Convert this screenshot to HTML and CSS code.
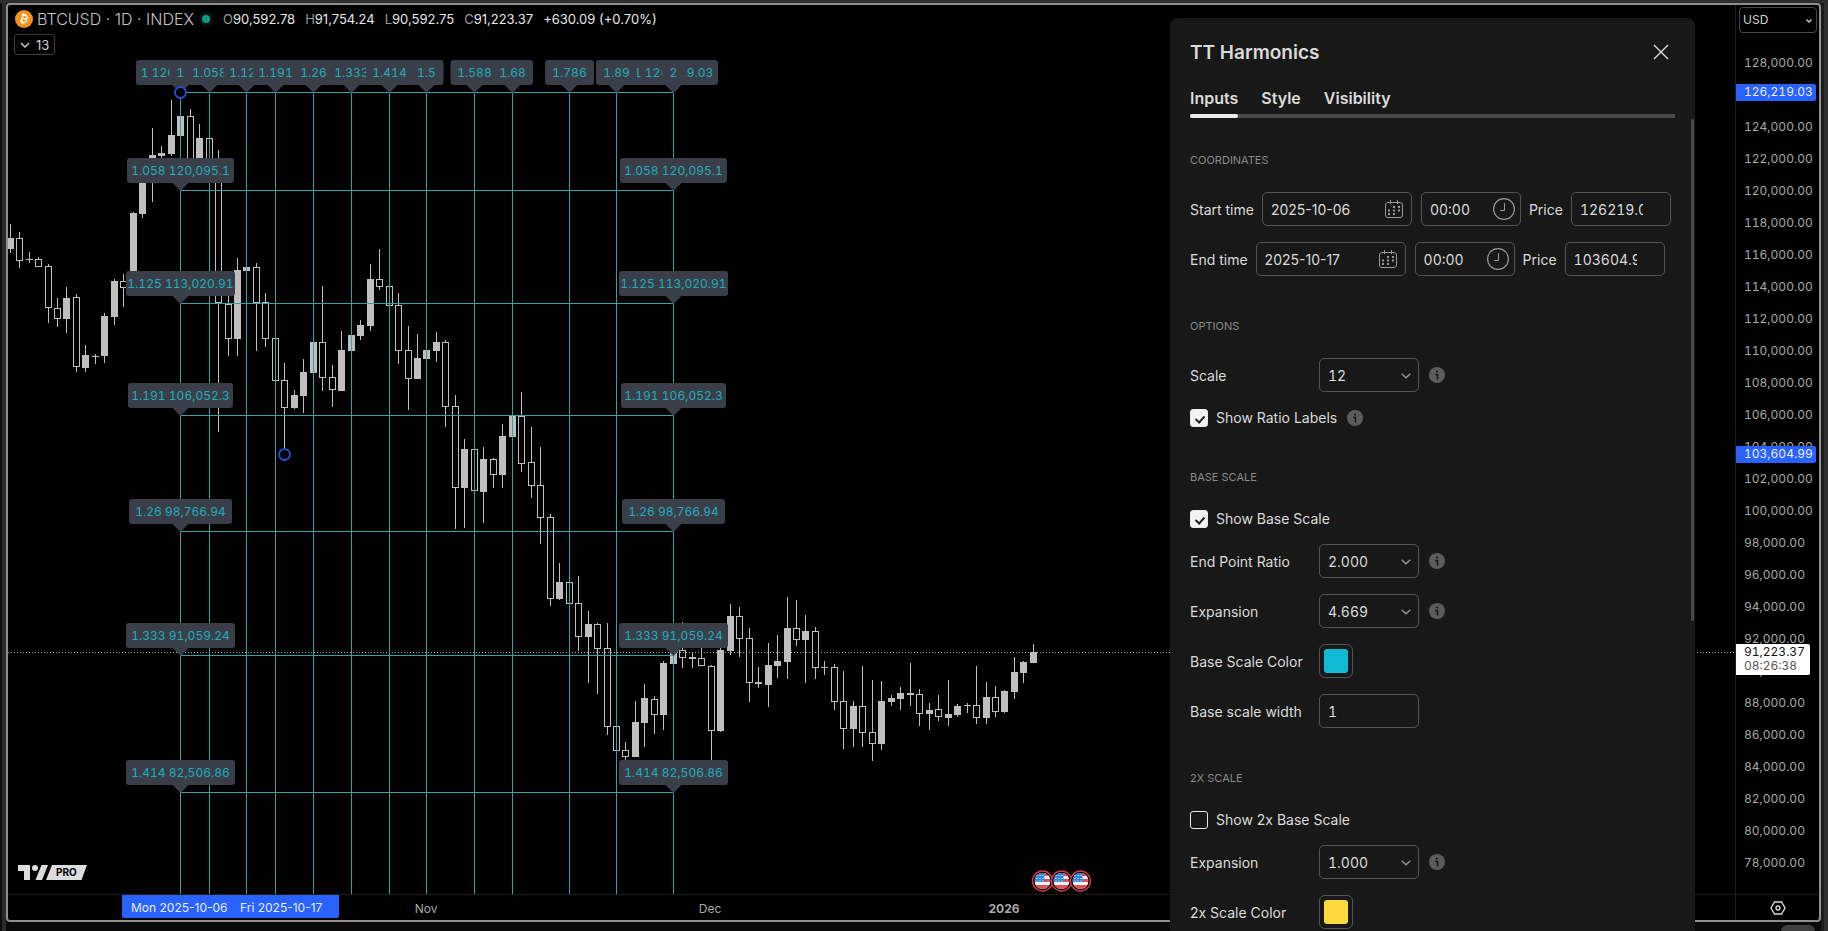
FILE: index.html
```html
<!DOCTYPE html>
<html lang="en">
<head>
    <meta charset="utf-8">
    <title>BTCUSD - TT Harmonics</title>
    <link rel="stylesheet" href="styles.css">
</head>
<body>
    <main class="chart-frame">
        <section class="plot">
            <svg id="chart" class="chart"></svg>

            <div class="legend">
                <div class="legend-row">
                    <svg class="coin" width="18" height="18" viewBox="0 0 18 18">
                        <circle cx="9" cy="9" r="9" fill="#f7931a"/>
                        <path d="M6.6 4.6l4.2 1.1q2 .6 1.5 2.1-.4 1.1-1.7 1 1.5.6 1 2.1-.6 1.8-2.9 1.1L5 10.9M8 5l-1.7 6.4M6.9 8.2l3.6.9M8.8 3.3l-.5 1.9M10.7 3.8l-.5 1.9M7.1 11.6l-.5 2M9 12.1l-.5 2" fill="none" stroke="#fff" stroke-width="1.3"/>
                    </svg>
                    <span class="symbol">BTCUSD · 1D · INDEX</span>
                    <span class="market-dot"></span>
                    <span class="ohlc"><i>O</i>90,592.78</span>
                    <span class="ohlc"><i>H</i>91,754.24</span>
                    <span class="ohlc"><i>L</i>90,592.75</span>
                    <span class="ohlc"><i>C</i>91,223.37</span>
                    <span class="ohlc">+630.09 (+0.70%)</span>
                </div>
                <button class="collapse">
                    <svg width="10" height="6" viewBox="0 0 10 6"><path d="M1 1l4 4 4-4" fill="none" stroke="currentColor" stroke-width="1.4"/></svg>
                    13
                </button>
            </div>
        </section>

        <aside class="price-axis">
            <div class="currency">
                <select aria-label="Currency"><option>USD</option></select>
                <svg width="6" height="4" viewBox="0 0 6 4"><path d="M.5 .5l2.5 2.5 2.5-2.5" fill="none" stroke="currentColor" stroke-width="1.3"/></svg>
            </div>
            <ul id="prices" class="prices"></ul>
            <div class="price-tag start">126,219.03</div>
            <div class="price-tag end">103,604.99</div>
            <div class="price-tag last">91,223.37<span>08:26:38</span></div>
        </aside>

        <div class="time-axis"><svg id="times" class="chart"></svg></div>
        <button class="axis-settings" aria-label="Axis settings">
            <svg width="16" height="14" viewBox="0 0 16 14"><path d="M4.5 1h7L15 7l-3.5 6h-7L1 7z" fill="none" stroke="#ddd" stroke-width="1.3"/><circle cx="8" cy="7" r="2" fill="none" stroke="#ddd" stroke-width="1.3"/></svg>
        </button>
    </main>
    <div class="dock-tab"></div>

    <form class="dialog">
        <header class="dialog-head">
            <h2>TT Harmonics</h2>
            <button type="button" class="close" aria-label="Close">
                <svg width="16" height="16" viewBox="0 0 16 16"><path d="M1 1l14 14M15 1L1 15" stroke="currentColor" stroke-width="1.4"/></svg>
            </button>
        </header>
        <nav class="tabs">
            <button type="button" class="tab active">Inputs</button>
            <button type="button" class="tab">Style</button>
            <button type="button" class="tab">Visibility</button>
        </nav>

        <div class="dialog-body">
            <h3>Coordinates</h3>
            <div class="row">
                <label for="start-date">Start time</label>
                <div class="field date"><input id="start-date" value="2025-10-06"><svg class="icon-cal"><use href="#cal"/></svg></div>
                <div class="field time"><input aria-label="Start hour" value="00:00"><svg class="icon-clock"><use href="#clock"/></svg></div>
                <label for="start-price">Price</label>
                <input id="start-price" class="box price" value="126219.03">
            </div>
            <div class="row">
                <label for="end-date">End time</label>
                <div class="field date"><input id="end-date" value="2025-10-17"><svg class="icon-cal"><use href="#cal"/></svg></div>
                <div class="field time"><input aria-label="End hour" value="00:00"><svg class="icon-clock"><use href="#clock"/></svg></div>
                <label for="end-price">Price</label>
                <input id="end-price" class="box price" value="103604.99">
            </div>

            <h3>Options</h3>
            <div class="row">
                <label class="name" for="scale">Scale</label>
                <div class="select"><select id="scale" class="box"><option>12</option></select><svg class="chev"><use href="#chev"/></svg></div>
                <svg class="info"><use href="#info"/></svg>
            </div>
            <div class="row check">
                <input type="checkbox" id="show-labels" checked>
                <label for="show-labels">Show Ratio Labels</label>
                <svg class="info"><use href="#info"/></svg>
            </div>

            <h3>Base scale</h3>
            <div class="row check">
                <input type="checkbox" id="show-base" checked>
                <label for="show-base">Show Base Scale</label>
            </div>
            <div class="row">
                <label class="name" for="ratio">End Point Ratio</label>
                <div class="select"><select id="ratio" class="box"><option>2.000</option></select><svg class="chev"><use href="#chev"/></svg></div>
                <svg class="info"><use href="#info"/></svg>
            </div>
            <div class="row">
                <label class="name" for="expansion">Expansion</label>
                <div class="select"><select id="expansion" class="box"><option>4.669</option></select><svg class="chev"><use href="#chev"/></svg></div>
                <svg class="info"><use href="#info"/></svg>
            </div>
            <div class="row">
                <label class="name" for="base-color">Base Scale Color</label>
                <input type="color" id="base-color" value="#0fbad6">
            </div>
            <div class="row">
                <label class="name" for="base-width">Base scale width</label>
                <input id="base-width" class="box" value="1">
            </div>

            <h3>2x scale</h3>
            <div class="row check">
                <input type="checkbox" id="show-2x">
                <label for="show-2x">Show 2x Base Scale</label>
            </div>
            <div class="row">
                <label class="name" for="expansion-2x">Expansion</label>
                <div class="select"><select id="expansion-2x" class="box"><option>1.000</option></select><svg class="chev"><use href="#chev"/></svg></div>
                <svg class="info"><use href="#info"/></svg>
            </div>
            <div class="row">
                <label class="name" for="color-2x">2x Scale Color</label>
                <input type="color" id="color-2x" value="#ffd83b">
            </div>
        </div>
        <div class="scrollbar"></div>
    </form>

    <svg class="sprites">
        <symbol id="cal" viewBox="0 0 18 18">
            <rect x=".5" y="2.5" width="17" height="15" rx="2.5" fill="none" stroke="currentColor"/>
            <path d="M5.5 0v4M12.5 0v4" stroke="currentColor"/>
            <path d="M8 6h2v2h-2zM13 6h2v2h-2zM3 9.5h2v2h-2zM8 9.5h2v2h-2zM13 9.5h2v2h-2zM3 13h2v2h-2zM8 13h2v2h-2z" fill="currentColor"/>
        </symbol>
        <symbol id="clock" viewBox="0 0 22 22">
            <circle cx="11" cy="11" r="10.4" fill="none" stroke="currentColor" stroke-width="1.2"/>
            <path d="M11.5 5v7.5h-4.5" fill="none" stroke="currentColor"/>
        </symbol>
        <symbol id="chev" viewBox="0 0 10 6">
            <path d="M.7 .7l4.3 4.1L9.3 .7" fill="none" stroke="currentColor" stroke-width="1.3"/>
        </symbol>
        <symbol id="info" viewBox="0 0 16 16">
            <circle cx="8" cy="8" r="8" fill="#5c5c5c"/>
            <path d="M6 7.5h2.5v5" fill="none" stroke="#181818" stroke-width="1.6"/>
            <circle cx="8" cy="4.5" r="1.1" fill="#181818"/>
        </symbol>
    </svg>

    <script src="script.js"></script>
</body>
</html>
```

FILE: styles.css
```css
* {
    box-sizing: border-box;
}
body {
    margin: 0;
    height: 100vh;
    overflow: hidden;
    display: flex;
    position: relative;
    padding: 3px 7px 9px 6px;
    background: linear-gradient(#2e2e2e 3px, transparent 3px),
        linear-gradient(90deg, #0d0d0d 2px, #2b2b2b 2px, #2b2b2b 6px, transparent 6px),
        linear-gradient(270deg, #303030 4px, #1c1c1c 4px, #1c1c1c 7px, transparent 7px),
        #0a0a0a;
    font-family: Inter, "Liberation Sans", sans-serif;
    font-size: 14px;
    color: #dbdbdb;
}
button, input, select {
    font: inherit;
    color: inherit;
    margin: 0;
    padding: 0;
    border: none;
    background: none;
}
svg {
    flex: none;
}
.price-axis, .tag-text, .box, .time input {
    font-variant-numeric: tabular-nums;
}

/* chart */
.chart-frame {
    flex: 1;
    display: grid;
    grid-template-columns: 1fr 84px;
    grid-template-rows: 1fr 26px;
    border: 2px solid #8f8f8f;
    border-radius: 4px;
    background: #000;
}
.plot {
    position: relative;
    min-width: 0;
    min-height: 0;
}
.chart {
    display: block;
    width: 100%;
    height: 100%;
}
.time-axis {
    min-width: 0;
    border-top: 1px solid #1c1c1c;
}
.legend {
    position: absolute;
    top: 4px;
    left: 6px;
}
.legend-row {
    display: flex;
    align-items: center;
    height: 20px;
}
.coin {
    margin: 0 4px 0 1px;
}
.symbol {
    font-size: 16px;
    font-weight: 300;
    color: #c4c4c4;
}
.market-dot {
    width: 8px;
    height: 8px;
    margin: 0 13px 0 8px;
    border-radius: 50%;
    background: #159a80;
    box-shadow: 0 0 0 3px #021512;
}
.ohlc {
    margin-right: 10px;
    font-size: 13px;
    color: #e8e8e8;
}
.ohlc i {
    font-style: normal;
    color: #9a9a9a;
}
.collapse {
    display: flex;
    align-items: center;
    gap: 6px;
    height: 21px;
    margin-top: 5px;
    padding: 0 5px;
    border: 1px solid #3d3d3d;
    border-radius: 3px;
    font-size: 13px;
    color: #d0d0d0;
}

/* price axis */
.price-axis {
    position: relative;
    min-height: 0;
    border-left: 1px solid #1c1c1c;
    font-size: 12px;
    color: #a8a8a8;
}
.currency {
    position: relative;
    height: 42px;
    padding: 2px 2px 0 3px;
}
.currency select {
    appearance: none;
    width: 100%;
    height: 26px;
    padding: 0 0 1px 3px;
    border: 1px solid #484848;
    border-radius: 4px;
    color: #d0d0d0;
}
.currency svg {
    position: absolute;
    right: 7px;
    top: 14px;
    color: #d0d0d0;
}
.prices {
    margin: 0;
    padding: 0 0 0 8px;
    list-style: none;
}
.prices li {
    height: 32px;
    line-height: 32px;
}
.price-tag {
    position: absolute;
    left: 0;
    padding: 0 0 1px 8px;
    line-height: 16px;
    border-radius: 0 2px 2px 0;
}
.price-tag.start, .price-tag.end {
    width: 80px;
    background: #2962ff;
    color: #e6edff;
}
.price-tag.start {
    top: 79px;
}
.price-tag.end {
    top: 441px;
}
.price-tag.last {
    top: 639px;
    width: 74px;
    padding-top: 1px;
    padding-bottom: 2px;
    line-height: 14px;
    background: #fff;
    color: #111;
}
.price-tag.last span {
    display: block;
    color: #555;
}
.axis-settings {
    display: flex;
    align-items: center;
    justify-content: center;
    border-top: 1px solid #1c1c1c;
    border-left: 1px solid #1c1c1c;
}
.dock-tab {
    position: absolute;
    right: 13px;
    bottom: 0;
    width: 34px;
    height: 6px;
    border-radius: 6px 6px 0 0;
    background: #3f3f3f;
}

/* chart text */
.tag-text {
    font-size: 12px;
    text-anchor: middle;
    fill: #20aebd;
}
.tick {
    font-size: 12px;
    text-anchor: middle;
    fill: #a8a8a8;
}
.tick.year {
    font-weight: 700;
}
.date-tag {
    font-size: 12px;
    fill: #e6edff;
}
.pro {
    font-size: 10px;
    font-weight: 700;
}

/* settings dialog */
.dialog {
    position: absolute;
    top: 18px;
    right: 133px;
    bottom: 0;
    width: 525px;
    padding: 24px 20px 0;
    overflow: hidden;
    border-radius: 8px 8px 0 0;
    background: #181818;
}
.dialog-head {
    display: flex;
    align-items: center;
    justify-content: space-between;
    height: 20px;
}
.dialog-head h2 {
    margin: 0;
    font-size: 19px;
    font-weight: 600;
}
.close {
    display: flex;
    margin-right: 6px;
}
.tabs {
    display: flex;
    gap: 23px;
    height: 34px;
    margin-top: 22px;
    border-bottom: 4px solid #4a4a4a;
}
.tab {
    position: relative;
    height: 30px;
    padding-bottom: 2px;
    font-size: 16px;
    font-weight: 600;
}
.tab.active::after {
    content: "";
    position: absolute;
    left: 0;
    right: 0;
    bottom: -4px;
    height: 4px;
    border-radius: 2px;
    background: #ebebeb;
}
.dialog-body {
    display: flex;
    flex-direction: column;
    gap: 16px;
    padding-top: 34px;
}
.dialog-body h3 {
    margin: 26px 0 8px;
    font-size: 11px;
    font-weight: 400;
    line-height: 16px;
    text-transform: uppercase;
    color: #8a8a8a;
}
.dialog-body h3:first-child {
    margin-top: 0;
}
.row {
    display: flex;
    align-items: center;
    gap: 8px;
    height: 34px;
}
.row.check {
    height: 19px;
}
.name {
    width: 121px;
}
.box, .field {
    width: 100px;
    height: 34px;
    border: 1px solid #545454;
    border-radius: 5px;
}
.box {
    padding-left: 8px;
}
.field {
    display: flex;
    align-items: center;
    padding-left: 8px;
}
.field.date {
    width: 150px;
    padding-right: 8px;
}
.field.time {
    padding-right: 5px;
    margin-left: 1px;
}
.field input {
    flex: 1;
    min-width: 0;
}
.box.price {
    padding-right: 27px;
}
.icon-cal {
    width: 18px;
    height: 18px;
    color: #999;
}
.icon-clock {
    width: 22px;
    height: 22px;
    color: #999;
}
.select {
    position: relative;
}
.select select {
    appearance: none;
}
.chev {
    position: absolute;
    right: 8px;
    top: 15px;
    width: 10px;
    height: 6px;
    color: #999;
}
.info {
    width: 16px;
    height: 16px;
    margin-left: 2px;
}
input[type=color] {
    appearance: none;
    width: 34px;
    height: 34px;
    padding: 4px;
    border: 1px solid #545454;
    border-radius: 6px;
}
input[type=color]::-webkit-color-swatch-wrapper {
    padding: 0;
}
input[type=color]::-webkit-color-swatch {
    border: none;
    border-radius: 3px;
}
input[type=checkbox] {
    appearance: none;
    position: relative;
    width: 18px;
    height: 18px;
    border: 1px solid #e8e8e8;
    border-radius: 3px;
}
input[type=checkbox]:checked {
    background: #f2f2f2;
}
input[type=checkbox]:checked::after {
    content: "";
    position: absolute;
    left: 6px;
    top: 4px;
    width: 4px;
    height: 7px;
    border: solid #222;
    border-width: 0 2px 2px 0;
    transform: rotate(42deg);
}
.scrollbar {
    position: absolute;
    top: 101px;
    right: 1px;
    width: 3px;
    height: 502px;
    border-radius: 2px;
    background: #484848;
}
.sprites {
    display: none;
}
```

FILE: script.js
```js
// x, high, body top, body bottom, low, up (1 = filled, 0 = hollow)
const candles = [
    [10, 224, 238, 249, 253, 1], [19, 232, 238, 261, 268, 0], [29, 252, 259, 260, 263, 1],
    [38, 257, 259, 267, 267, 0], [48, 264, 266, 308, 323, 0], [57, 298, 308, 319, 327, 0],
    [66, 287, 298, 319, 333, 1], [76, 294, 297, 367, 372, 0], [85, 345, 355, 368, 372, 1],
    [95, 354, 356, 357, 364, 1], [104, 313, 316, 356, 363, 1], [114, 279, 281, 317, 325, 1],
    [123, 274, 281, 288, 307, 0], [133, 212, 213, 275, 275, 1], [142, 165, 168, 214, 218, 1],
    [152, 128, 155, 160, 202, 1], [161, 146, 153, 156, 158, 1], [171, 100, 135, 154, 156, 1],
    [180, 116, 116, 136, 136, 1], [190, 109, 116, 175, 175, 0], [199, 124, 138, 165, 165, 1],
    [209, 138, 138, 170, 170, 0], [218, 150, 165, 303, 432, 0], [228, 296, 304, 339, 356, 0],
    [237, 258, 270, 339, 356, 1], [246, 267, 267, 271, 271, 1], [256, 263, 267, 303, 351, 0],
    [265, 293, 302, 339, 347, 0], [275, 338, 338, 381, 381, 0], [284, 363, 380, 408, 448, 0],
    [294, 390, 395, 408, 409, 1], [303, 359, 372, 396, 413, 1], [313, 342, 342, 373, 373, 1],
    [322, 286, 342, 378, 391, 0], [332, 365, 377, 390, 407, 0], [341, 331, 350, 391, 391, 1],
    [351, 335, 335, 351, 351, 1], [360, 320, 325, 336, 340, 1], [370, 264, 279, 326, 331, 1],
    [379, 249, 279, 287, 290, 0], [389, 286, 286, 306, 306, 0], [398, 293, 305, 351, 364, 0],
    [408, 326, 350, 379, 410, 0], [417, 334, 358, 379, 379, 1], [426, 350, 350, 359, 359, 1],
    [436, 332, 342, 351, 362, 1], [445, 340, 342, 407, 427, 0], [455, 395, 406, 488, 529, 0],
    [464, 439, 449, 488, 528, 1], [474, 449, 449, 491, 491, 0], [483, 447, 459, 492, 523, 1],
    [493, 458, 459, 475, 488, 0], [502, 424, 436, 475, 488, 1], [512, 415, 415, 437, 437, 1],
    [521, 392, 416, 464, 472, 0], [531, 427, 462, 486, 498, 0], [540, 447, 485, 518, 544, 0],
    [550, 514, 517, 599, 606, 0], [559, 563, 582, 599, 600, 1], [569, 582, 582, 604, 604, 0],
    [578, 576, 603, 637, 651, 0], [588, 611, 624, 637, 683, 1], [597, 623, 624, 649, 694, 0],
    [607, 623, 648, 727, 735, 0], [616, 726, 726, 751, 751, 0], [625, 742, 750, 757, 760, 0],
    [635, 701, 722, 757, 757, 1], [644, 684, 698, 723, 747, 1], [654, 696, 699, 715, 734, 0],
    [663, 661, 663, 715, 730, 1], [673, 650, 652, 664, 664, 1], [682, 622, 650, 658, 668, 0],
    [692, 652, 657, 659, 668, 1], [701, 645, 658, 666, 666, 0], [711, 665, 666, 731, 760, 0],
    [720, 645, 650, 731, 732, 1], [730, 604, 616, 651, 655, 1], [739, 607, 616, 639, 657, 0],
    [749, 628, 638, 683, 702, 0], [758, 667, 682, 684, 688, 1], [768, 643, 665, 685, 707, 1],
    [777, 635, 661, 666, 678, 1], [787, 597, 628, 662, 679, 1], [796, 600, 628, 640, 646, 0],
    [805, 615, 631, 640, 683, 1], [815, 627, 631, 668, 679, 0], [824, 661, 667, 668, 675, 1],
    [834, 664, 667, 702, 710, 0], [843, 671, 701, 729, 749, 0], [853, 701, 706, 729, 747, 1],
    [862, 666, 706, 733, 747, 0], [872, 680, 732, 744, 761, 0], [881, 681, 701, 744, 750, 1],
    [891, 695, 698, 702, 706, 1], [900, 687, 693, 699, 710, 1], [910, 663, 693, 695, 706, 1],
    [919, 689, 694, 714, 726, 0], [929, 703, 710, 714, 730, 1], [938, 695, 709, 717, 721, 0],
    [948, 680, 714, 718, 726, 1], [957, 704, 706, 715, 717, 1], [967, 703, 705, 706, 713, 1],
    [976, 666, 705, 718, 724, 0], [986, 682, 697, 718, 724, 1], [995, 686, 697, 712, 717, 0],
    [1004, 690, 691, 712, 713, 1], [1014, 657, 672, 692, 699, 1], [1023, 661, 662, 673, 683, 1],
    [1033, 644, 652, 663, 663, 1]
];

const columns = [180, 209, 246, 275, 313, 351, 389, 426, 474, 512, 569, 616, 673];
const levels = [92, 190, 303, 415, 531, 655, 792];

// centre x, tip y, width, text; later ones lie on top
const tags = [
    [180, 92, 89, '1 126,219.03'], [673, 92, 89, '1 126,219.03'],
    [180, 92, 22, '1'], [209, 92, 48, '1.058'], [246, 92, 46, '1.125'], [275, 92, 46, '1.191'],
    [313, 92, 38, '1.26'], [351, 92, 47, '1.333'], [389, 92, 47, '1.414'], [426, 92, 34, '1.5'],
    [474, 92, 48, '1.588'], [512, 92, 41, '1.68'], [569, 92, 49, '1.786'], [616, 92, 41, '1.89'],
    [673, 92, 24, '2']
];
[[190, 107, '1.058 120,095.1'], [303, 109, '1.125 113,020.91'], [415, 105, '1.191 106,052.3'],
 [531, 103, '1.26 98,766.94'], [655, 109, '1.333 91,059.24'], [792, 109, '1.414 82,506.86']]
    .forEach(([y, w, text]) => tags.push([180, y, w, text], [673, y, w, text]));

let out = '<g transform="translate(-8 -5)" shape-rendering="crispEdges">';
for (const [x, high, top, bottom, low, up] of candles) {
    if (high < top) out += `<rect x="${x}" y="${high}" width="1" height="${top - high}" fill="#bfbfbf"/>`;
    if (low > bottom) out += `<rect x="${x}" y="${bottom}" width="1" height="${low - bottom}" fill="#bfbfbf"/>`;
    out += up
        ? `<rect x="${x - 3}" y="${top}" width="7" height="${bottom - top}" fill="#bfbfbf"/>`
        : `<rect x="${x - 2.5}" y="${top + 0.5}" width="6" height="${bottom - top - 1}" fill="none" stroke="#bfbfbf"/>`;
}
out += '<path d="M8 652.5H1736" stroke="#b8b8b8" stroke-dasharray="1 2"/>';
for (const x of columns) out += `<path d="M${x + 0.5} 92V894" stroke="#3a9fa8"/>`;
for (const y of levels) out += `<path d="M180 ${y + 0.5}H673" stroke="#3a9fa8"/>`;
out += '</g><g transform="translate(-8 -5)">';
out += tags.map(([x, y, w, text]) => {
    const c = x + 0.5;
    return `<rect x="${c - w / 2}" y="${y - 32}" width="${w}" height="25" rx="3" fill="#3a3e48"/>
        <path d="M${c - 8} ${y - 7}h16l-8 8z" fill="#3a3e48"/>
        <text class="tag-text" x="${c}" y="${y - 15}">${text}</text>`;
}).join('');
for (const [x, y] of [[180.5, 92.5], [284.5, 454.5]])
    out += `<circle cx="${x}" cy="${y}" r="5.5" fill="#000" stroke="#2251d6" stroke-width="1.8"/>`;

// economic events
out += '<clipPath id="round"><circle r="8"/></clipPath>';
for (const x of [1042, 1061, 1080]) {
    out += `<g transform="translate(${x + 0.5} 881)"><circle r="10" fill="#000" stroke="#d13c4b" stroke-width="1.4"/>
        <g clip-path="url(#round)"><path d="M-8-8H8V8H-8z" fill="#f4f1f2"/>
        <path d="M-8-8H8v3H-8zM-8-2H8v3H-8zM-8 4H8v4H-8z" fill="#e0525a"/>
        <path d="M-8-8H2V1H-8z" fill="#2f86e0"/>
        <path d="M-6-5.5H2M-6-2.5H2M-6 0H2" stroke="#fff" stroke-dasharray="1 2"/></g></g>`;
}

// logo
out += `<g fill="#dcdcdc"><path d="M18 865h12v15h-6v-9h-6z"/><circle cx="35" cy="868" r="3"/>
    <path d="M41.5 865h6.5l-6 15h-6.5z"/><path d="M52 865h35l-5.5 15h-35.5z"/></g>
    <text class="pro" x="56" y="876">PRO</text></g>`;
document.getElementById('chart').innerHTML = out;

document.getElementById('times').innerHTML = `<g transform="translate(-8 -895)">
    <rect x="122" y="893" width="217" height="25" rx="2" fill="#2962ff"/>
    <text class="date-tag" x="131" y="912">Mon 2025-10-06</text>
    <text class="date-tag" x="240" y="912">Fri 2025-10-17</text>
    <text class="tick" x="426" y="913">Nov</text>
    <text class="tick" x="710" y="913">Dec</text>
    <text class="tick year" x="1004" y="913">2026</text></g>`;

let list = '';
for (let p = 128000; p >= 78000; p -= 2000) list += `<li>${p === 126000 ? '&nbsp;' : p.toLocaleString('en-US') + '.00'}</li>`;
document.getElementById('prices').innerHTML = list;
```
